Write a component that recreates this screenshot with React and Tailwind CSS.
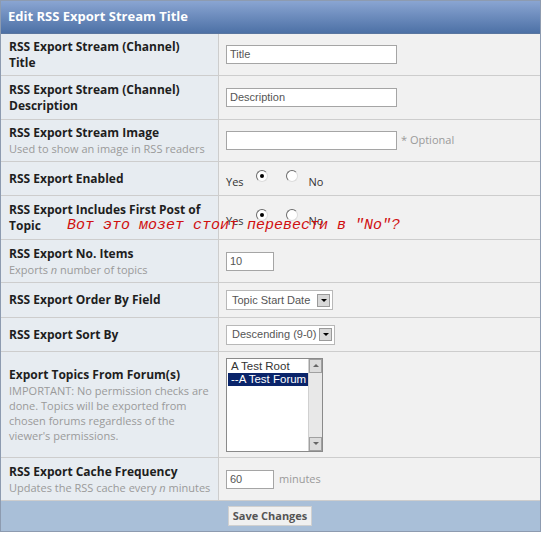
import React from 'react';

const labelFont = { fontFamily: '"Open Sans", "DejaVu Sans", sans-serif' };

function Radio({ checked }) {
    return (
        <span className="flex items-center justify-center w-[12px] h-[12px] rounded-full border border-t-[#6b6b6b] border-l-[#6b6b6b] border-r-[#dcdcdc] border-b-[#dcdcdc] bg-white">
            {checked && <span className="w-[4px] h-[4px] rounded-full bg-black" />}
        </span>
    );
}

function YesNo() {
    return (
        <div className="flex items-start text-[11px] text-[#333] h-[20px] mt-[3px]" style={labelFont}>
            <span className="mt-[5px] leading-[14px]">Yes</span>
            <span className="ml-[12px]"><Radio checked /></span>
            <span className="ml-[18px]"><Radio /></span>
            <span className="ml-[11px] mt-[5px] leading-[14px]">No</span>
        </div>
    );
}

function TextBox({ value, width }) {
    return (
        <div className={`h-[19px] ${width} border border-[#a5a5a5] bg-white px-[3px] text-[11px] leading-[17px] text-[#555]`} style={{ fontFamily: '"Liberation Sans", Arial, sans-serif' }}>
            {value}
        </div>
    );
}

function Select({ value, width }) {
    return (
        <div className={`h-[20px] ${width} border border-[#b8b8b8] bg-white flex items-center justify-between pl-[5px] pr-[2px] text-[11px] text-[#555]`} style={{ fontFamily: '"Liberation Sans", Arial, sans-serif' }}>
            <span>{value}</span>
            <span className="w-[13px] h-[13px] bg-[#d8d8d8] border border-[#9a9a9a] flex items-center justify-center">
                <span className="w-0 h-0 border-l-[3px] border-r-[3px] border-t-[3px] border-l-transparent border-r-transparent border-t-black" />
            </span>
        </div>
    );
}

function Row({ height, label, desc, children }) {
    return (
        <div className={`flex ${height} border-b border-[#cdcdcd]`}>
            <div className="w-[218px] shrink-0 bg-[#e7ecf1] border-r border-[#cdcdcd] pl-[8px] pr-[4px] flex flex-col justify-center" style={labelFont}>
                <div className="text-[12px] font-bold leading-[16px] text-[#1e1e1e] whitespace-nowrap">{label}</div>
                {desc && <div className="text-[11px] leading-[15px] text-[#9a9a9a] whitespace-nowrap">{desc}</div>}
            </div>
            <div className="flex-1 bg-[#f1f1f1] pl-[7px] flex items-center">{children}</div>
        </div>
    );
}

export default function App() {
    return (
        <div className="relative w-[542px] h-[533px] bg-white">
            <div className="w-[541px] border border-[#8d9bb0]">
                <div className="h-[33px] bg-gradient-to-b from-[#8aa5d2] to-[#4d71a6] border-b border-[#5a76a0] flex items-center px-[7px] text-white text-[13px] font-bold" style={labelFont}>
                    Edit RSS Export Stream Title
                </div>
                <Row height="h-[42px]" label={<>RSS Export Stream (Channel)<br />Title</>}>
                    <TextBox value="Title" width="w-[171px]" />
                </Row>
                <Row height="h-[44px]" label={<>RSS Export Stream (Channel)<br />Description</>}>
                    <TextBox value="Description" width="w-[171px]" />
                </Row>
                <Row height="h-[42px]" label="RSS Export Stream Image" desc="Used to show an image in RSS readers">
                    <TextBox value="" width="w-[171px]" />
                    <span className="ml-[4px] text-[11px] text-[#9a9a9a]" style={labelFont}>* Optional</span>
                </Row>
                <Row height="h-[34px]" label="RSS Export Enabled">
                    <YesNo />
                </Row>
                <Row height="h-[44px]" label={<>RSS Export Includes First Post of<br />Topic</>}>
                    <YesNo />
                </Row>
                <Row height="h-[43px]" label="RSS Export No. Items" desc={<>Exports <i>n</i> number of topics</>}>
                    <TextBox value="10" width="w-[48px]" />
                </Row>
                <Row height="h-[35px]" label="RSS Export Order By Field">
                    <Select value="Topic Start Date" width="w-[107px]" />
                </Row>
                <Row height="h-[34px]" label="RSS Export Sort By">
                    <Select value="Descending (9-0)" width="w-[109px]" />
                </Row>
                <Row height="h-[106px]" label="Export Topics From Forum(s)" desc={<>IMPORTANT: No permission checks are<br />done. Topics will be exported from<br />chosen forums regardless of the<br />viewer's permissions.</>}>
                    <div className="w-[97px] h-[94px] border border-[#8a8a8a] bg-white flex text-[11.5px] leading-[13px]" style={{ fontFamily: '"Liberation Sans", Arial, sans-serif' }}>
                        <div className="flex-1 pt-[1px] pl-[1px]">
                            <div className="pl-[3px] text-[#333]">A Test Root</div>
                            <div className="pl-[3px] bg-[#0a246a] text-white">--A Test Forum</div>
                        </div>
                        <div className="w-[14px] bg-[#e8e8e8] flex flex-col justify-between border-l border-[#d0d0d0]">
                            <div className="h-[14px] bg-[#dcdcdc] border border-[#a0a0a0] flex items-center justify-center">
                                <span className="w-0 h-0 border-l-[3px] border-r-[3px] border-b-[3px] border-l-transparent border-r-transparent border-b-[#666]" />
                            </div>
                            <div className="h-[14px] bg-[#dcdcdc] border border-[#a0a0a0] flex items-center justify-center">
                                <span className="w-0 h-0 border-l-[3px] border-r-[3px] border-t-[3px] border-l-transparent border-r-transparent border-t-[#666]" />
                            </div>
                        </div>
                    </div>
                </Row>
                <Row height="h-[43px]" label="RSS Export Cache Frequency" desc={<>Updates the RSS cache every <i>n</i> minutes</>}>
                    <TextBox value="60" width="w-[48px]" />
                    <span className="ml-[5px] text-[11px] text-[#9a9a9a]" style={labelFont}>minutes</span>
                </Row>
                <div className="h-[30px] bg-[#a9bfd8] flex items-center justify-center">
                    <button className="h-[20px] px-[4px] ml-[-1px] bg-[#f0f0f0] border border-[#d0d0d0] text-[11px] font-bold text-[#555]" style={labelFont}>
                        Save Changes
                    </button>
                </div>
            </div>
            <div className="absolute left-[67px] top-[217px] text-[15px] italic text-[#d01010] whitespace-nowrap leading-[18px]" style={{ fontFamily: '"Liberation Mono", "DejaVu Sans Mono", monospace' }}>
                Вот это мозет стоит перевести в "No"?
            </div>
        </div>
    );
}
